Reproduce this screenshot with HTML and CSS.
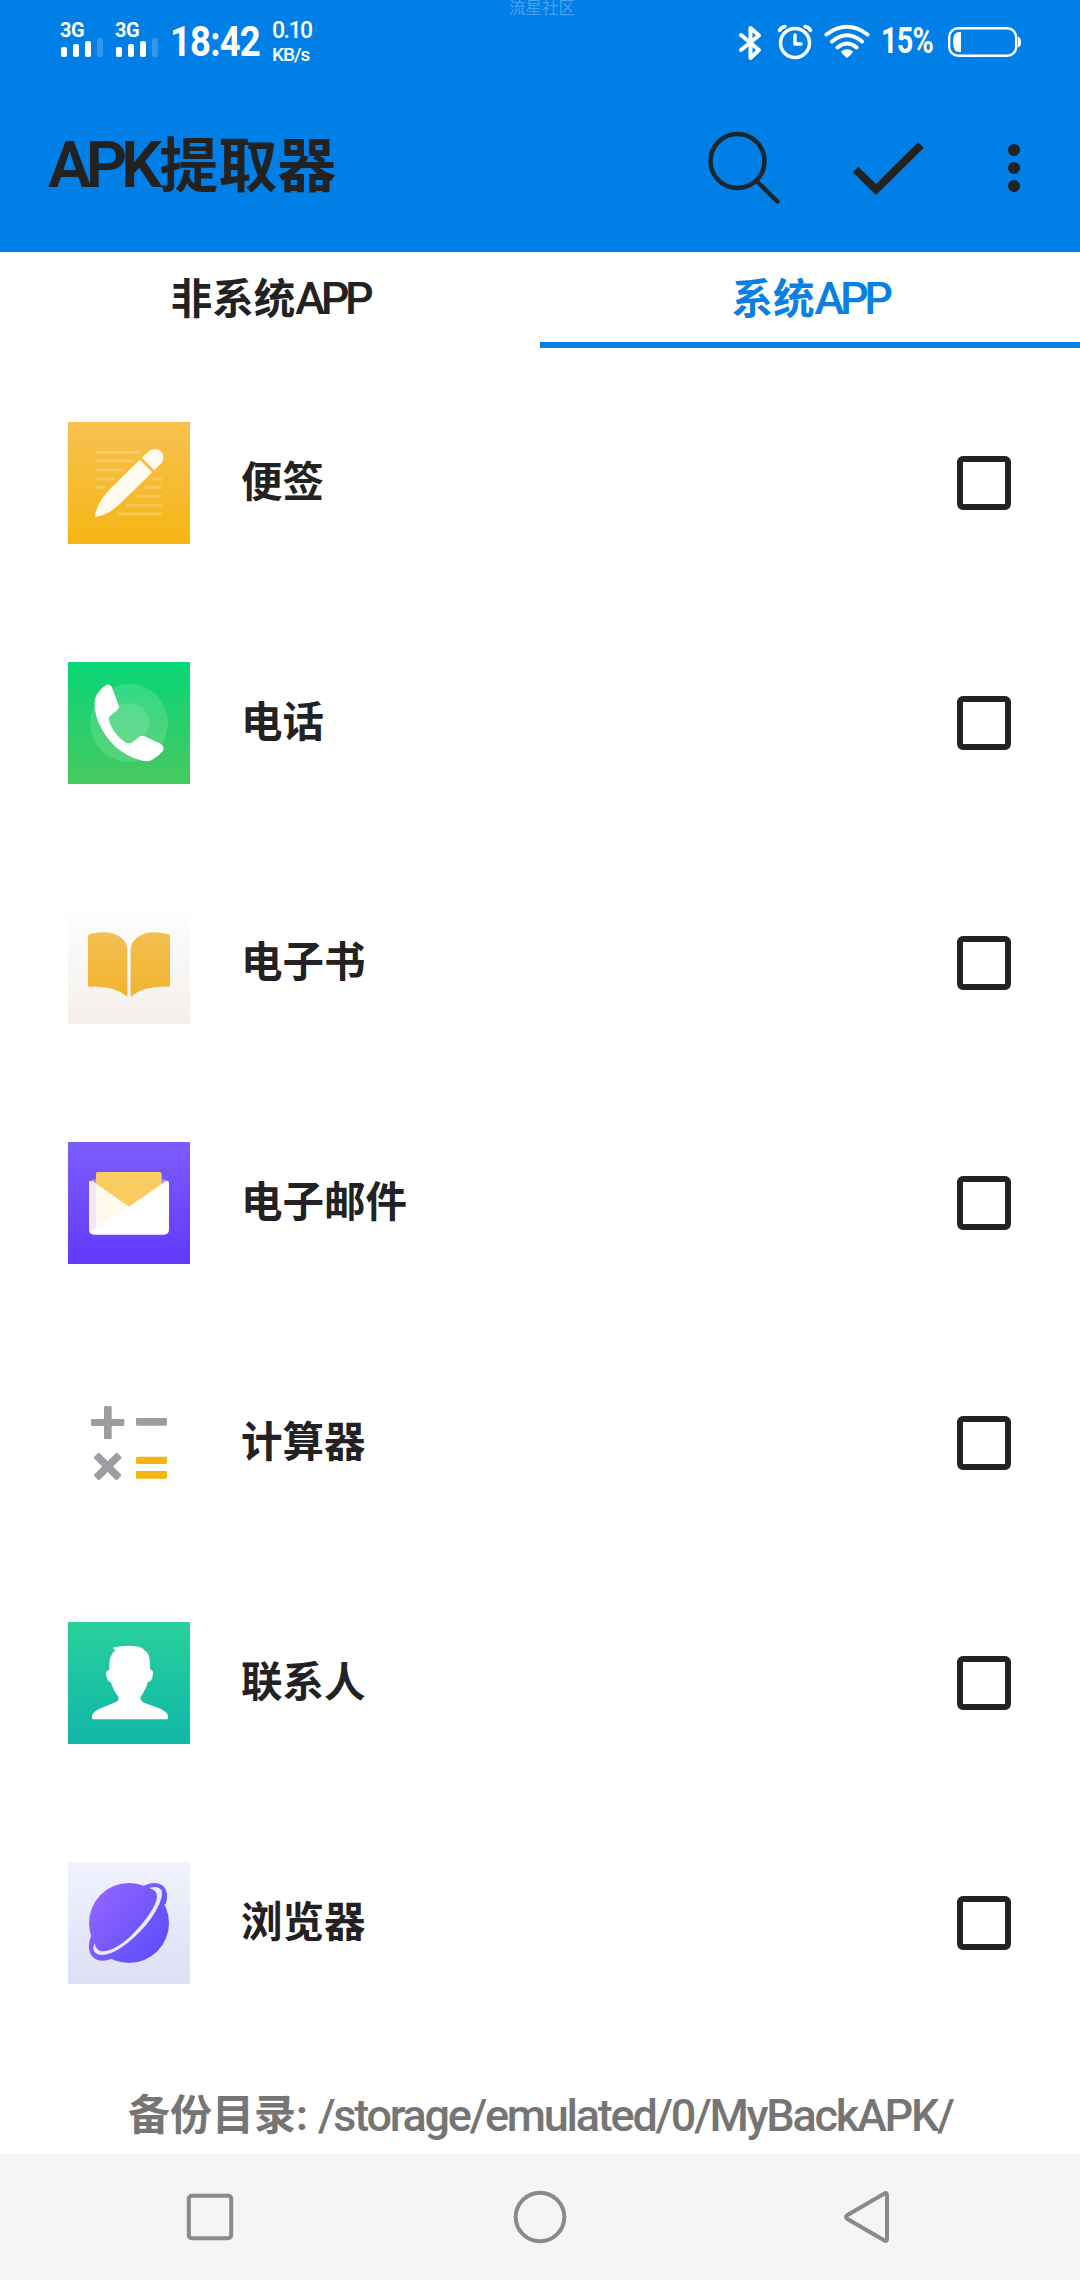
FILE: index.html
```html
<!DOCTYPE html>
<html lang="zh-CN">
<head>
  <meta charset="UTF-8" />
  <meta name="viewport" content="width=device-width, initial-scale=1" />
  <title>APK提取器</title>
  <link rel="stylesheet" href="styles.css">
</head>

<body>
  <div class="watermark">流星社区</div>

  <!-- Status bar -->
  <div class="status-bar">
    <div class="status-left">
      <div class="signal">
        <span>3G</span>
        <svg width="42" height="19" viewBox="0 0 42 19" fill="#fff">
          <rect x="0" y="9" width="6" height="10" rx="2" />
          <rect x="12" y="6" width="6" height="13" rx="2" />
          <rect x="24" y="3" width="6" height="16" rx="2" />
          <rect x="36" y="0" width="6" height="19" rx="2" opacity="0.2" />
        </svg>
      </div>
      <div class="signal">
        <span>3G</span>
        <svg width="42" height="19" viewBox="0 0 42 19" fill="#fff">
          <rect x="0" y="9" width="6" height="10" rx="2" />
          <rect x="12" y="6" width="6" height="13" rx="2" />
          <rect x="24" y="3" width="6" height="16" rx="2" />
          <rect x="36" y="0" width="6" height="19" rx="2" opacity="0.2" />
        </svg>
      </div>
      <span class="clock">18:42</span>
      <div class="net-speed">
        <span class="speed">0.10</span>
        <span class="unit">KB/s</span>
      </div>
    </div>
    <div class="status-right">
      <svg class="bluetooth" width="24" height="36" viewBox="0 0 24 36" fill="none" stroke="#fff" stroke-width="4" stroke-linecap="round" stroke-linejoin="round">
        <path d="M3 10L21 25L12.500 33V3L21 10.500L3 25" />
      </svg>
      <svg class="alarm" width="36" height="36" viewBox="0 0 36 36" fill="none" stroke="#fff" stroke-linecap="round">
        <circle cx="18" cy="19" r="14.500" stroke-width="3.500" />
        <path d="M18 11v9h6" stroke-width="3.500" stroke-linejoin="round" />
        <path d="M2.500 6.500Q4 3 8 2.500M33.500 6.500Q32 3 28 2.500" stroke-width="3.500" />
      </svg>
      <svg class="wifi" width="46" height="36" viewBox="0 0 46 36" fill="none" stroke="#fff" stroke-width="4" stroke-linecap="round">
        <path d="M2.500 10.500Q23 -5 43.500 10.500M8 17.500Q23 5 38 17.500M13.500 23.500Q23 15.500 32.500 23.500" />
        <path d="M17 27.500Q23 23 29 27.500Q28 30 23 34Q18 30 17 27.500Z" fill="#fff" stroke="none" />
      </svg>
      <span class="percent">15%</span>
      <svg class="battery" width="74" height="30" viewBox="0 0 74 30">
        <rect x="1.200" y="1.200" width="67" height="27.600" rx="9" fill="none" stroke="#fff" stroke-width="2.400" />
        <path d="M13 5v20h-2q-6 0-6-10t6-10z" fill="#fff" />
        <path d="M70 9.500q3 1 3 5.500t-3 5.500z" fill="#fff" />
      </svg>
    </div>
  </div>

  <!-- App bar -->
  <header class="app-bar">
    <h1><span class="latin">APK</span>提取器</h1>
    <div class="actions">
      <svg class="search" width="76" height="76" viewBox="0 0 76 76" fill="none" stroke="#18262f" stroke-width="4.500" stroke-linecap="round">
        <circle cx="31.500" cy="31" r="27" />
        <path d="M50.500 51L71.500 71.500" />
      </svg>
      <svg class="check" width="74" height="56" viewBox="0 0 74 56" fill="none" stroke="#222" stroke-width="8">
        <path d="M3.500 28.500L24 48.500L69 4" />
      </svg>
      <svg class="more" width="12" height="48" viewBox="0 0 12 48" fill="#222">
        <circle cx="6" cy="6" r="6" />
        <circle cx="6" cy="24" r="6" />
        <circle cx="6" cy="42" r="6" />
      </svg>
    </div>
  </header>

  <!-- Tabs -->
  <nav class="tabs">
    <a class="tab">非系统<span class="latin">APP</span></a>
    <a class="tab active">系统<span class="latin">APP</span></a>
  </nav>

  <!-- App list -->
  <ul class="app-list">
    <li>
      <svg class="icon" viewBox="0 0 366 366">
        <defs>
          <linearGradient id="note" x1="0" y1="0" x2="0" y2="1">
            <stop offset="0" stop-color="#f7c150" />
            <stop offset="1" stop-color="#f5b615" />
          </linearGradient>
        </defs>
        <rect width="366" height="366" fill="url(#note)" />
        <path d="M83 91h136M83 117h112M83 144h85M83 171h58M83 196h32M251 171h30M228 196h53M201 223h80M174 250h107M147 276h134" stroke="#fff" stroke-opacity="0.200" stroke-width="9" />
        <path d="M221 107L243 87Q258 76 274 85Q293 98 283 120L259 145Z" fill="#fffaf0" />
        <path d="M215 113L253 151L162 239Q122 281 81 285Q84 246 124 203Z" fill="#fffaf0" />
      </svg>
      <span class="name">便签</span>
      <span class="checkbox"></span>
    </li>
    <li>
      <svg class="icon" viewBox="0 0 366 366">
        <defs>
          <linearGradient id="phone" x1="0" y1="0" x2="0" y2="1">
            <stop offset="0" stop-color="#08d677" />
            <stop offset="1" stop-color="#47c95f" />
          </linearGradient>
        </defs>
        <rect width="366" height="366" fill="url(#phone)" />
        <circle cx="183" cy="183" r="117" fill="#fff" fill-opacity="0.140" />
        <circle cx="183" cy="183" r="60" fill="#fff" fill-opacity="0.130" />
        <path d="M114 69Q124 65 130 73Q134 81 153 133Q154 139 149 143L125 163Q121 168 123 176Q134 213 169 239Q179 247 191 242L216 223Q223 220 230 223L279 246Q290 254 285 267Q274 281 253 293Q238 301 218 295Q130 270 91 180Q76 141 81 110Q90 85 114 69Z" fill="#fff" />
      </svg>
      <span class="name">电话</span>
      <span class="checkbox"></span>
    </li>
    <li>
      <svg class="icon" viewBox="0 0 366 366">
        <defs>
          <linearGradient id="paper" x1="0" y1="0" x2="0" y2="1">
            <stop offset="0" stop-color="#fff" />
            <stop offset="1" stop-color="#f3efeb" />
          </linearGradient>
          <linearGradient id="book" x1="0" y1="0" x2="0" y2="1">
            <stop offset="0" stop-color="#f2c052" />
            <stop offset="1" stop-color="#f3b22d" />
          </linearGradient>
        </defs>
        <rect width="366" height="366" fill="url(#paper)" />
        <path d="M60 103Q60 98 66 96Q126 81 158 106Q178 123 178 142V284Q139 251 66 254Q60 254 60 248Z" fill="url(#book)" />
        <path d="M306 103Q306 98 300 96Q240 81 208 106Q188 123 188 142V284Q227 251 300 254Q306 254 306 248Z" fill="url(#book)" />
      </svg>
      <span class="name">电子书</span>
      <span class="checkbox"></span>
    </li>
    <li>
      <svg class="icon" viewBox="0 0 366 366">
        <defs>
          <linearGradient id="mail" x1="0" y1="0" x2="0" y2="1">
            <stop offset="0" stop-color="#7c5dfc" />
            <stop offset="1" stop-color="#6139fc" />
          </linearGradient>
        </defs>
        <rect width="366" height="366" fill="url(#mail)" />
        <rect x="66" y="112" width="234" height="40" rx="14" fill="#a78df8" />
        <path d="M84 96Q84 90 90 90H275Q281 90 281 96V150L183 210L84 140Z" fill="#f8cc61" />
        <path d="M63 124Q63 113 73 118L183 194L293 118Q303 113 303 124V262Q303 278 287 278H79Q63 278 63 262Z" fill="#fff" />
        <path d="M84 125L183 194L84 258Z" fill="#fffaec" />
        <path d="M63 124Q63 113 73 118L84 125V258L65 269Q63 266 63 262Z" fill="#eeeafc" />
      </svg>
      <span class="name">电子邮件</span>
      <span class="checkbox"></span>
    </li>
    <li>
      <svg class="icon" viewBox="0 0 366 366">
        <g fill="#9b9da1">
          <rect x="69" y="111" width="100" height="21" rx="4" />
          <rect x="108" y="72" width="23" height="99" rx="4" />
          <rect x="204" y="108" width="93" height="23" rx="4" />
          <g transform="rotate(45 119 253)">
            <rect x="70" y="242" width="98" height="23" rx="4" />
            <rect x="108" y="204" width="23" height="98" rx="4" />
          </g>
        </g>
        <g fill="#f6b516">
          <rect x="204" y="224" width="93" height="22" rx="4" />
          <rect x="204" y="267" width="93" height="23" rx="4" />
        </g>
      </svg>
      <span class="name">计算器</span>
      <span class="checkbox"></span>
    </li>
    <li>
      <svg class="icon" viewBox="0 0 366 366">
        <defs>
          <linearGradient id="contact" x1="0" y1="0" x2="0" y2="1">
            <stop offset="0" stop-color="#29d09b" />
            <stop offset="1" stop-color="#11b7a8" />
          </linearGradient>
        </defs>
        <rect width="366" height="366" fill="url(#contact)" />
        <path d="M136 76Q181 67 212 74Q226 78 232 87Q248 95 246 142Q257 145 255 156Q252 180 239 181Q235 201 217 226Q217 238 230 243L264 255Q300 267 300 284V288Q300 292 296 292H76Q72 292 72 288V284Q72 267 108 255L142 241Q153 237 152 226Q134 202 129 181Q118 181 114 157Q112 146 124 144Q121 99 143 84Q134 83 136 76Z" fill="#fff" />
      </svg>
      <span class="name">联系人</span>
      <span class="checkbox"></span>
    </li>
    <li>
      <svg class="icon" viewBox="0 0 366 366">
        <defs>
          <linearGradient id="sky" x1="0" y1="0" x2="0" y2="1">
            <stop offset="0" stop-color="#f0f2fe" />
            <stop offset="1" stop-color="#dce0f3" />
          </linearGradient>
          <linearGradient id="planet" gradientUnits="userSpaceOnUse" x1="80" y1="110" x2="270" y2="260">
            <stop offset="0" stop-color="#9063ff" />
            <stop offset="1" stop-color="#614ffb" />
          </linearGradient>
        </defs>
        <rect width="366" height="366" fill="url(#sky)" />
        <circle cx="183" cy="183" r="120" fill="url(#planet)" />
        <path d="M225 72Q264 54 285 71Q305 90 293 127L268 130L220 90ZM70 219Q54 263 74 284Q94 305 132 290L140 255L90 215Z" fill="url(#planet)" />
        <path d="M244 78Q272 70 281 86Q288 117 237 186Q177 254 129 273Q91 287 78 268Q73 256 80 244Q83 262 96 267Q131 274 189 222Q257 152 267 108Q268 84 244 78Z" fill="#e8ebfa" />
      </svg>
      <span class="name">浏览器</span>
      <span class="checkbox"></span>
    </li>
  </ul>

  <footer>备份目录<span class="colon">:</span><span class="path">/storage/emulated/0/MyBackAPK/</span></footer>

  <!-- System navigation -->
  <div class="nav-bar">
    <svg width="56" height="56" viewBox="0 0 56 56"><rect x="6.800" y="6.800" width="42.400" height="42.400" rx="3" /></svg>
    <svg width="56" height="56" viewBox="0 0 56 56"><circle cx="28" cy="28" r="24.300" /></svg>
    <svg width="56" height="56" viewBox="0 0 56 56"><path d="M43.500 4.500Q46 3 46 6V50Q46 53 43.500 51.500L6.500 30Q3.500 28 6.500 26Z" /></svg>
  </div>
</body>
</html>
```
FILE: styles.css
```css
/* Base styles */
* {
  box-sizing: border-box;
}

body {
  margin: 0;
  width: 1080px;
  height: 2280px;
  display: flex;
  flex-direction: column;
  position: relative;
  overflow: hidden;
  background: #fff;
  color: #222;
  font-family: Roboto, "Noto Sans CJK SC", sans-serif;
  font-weight: 700;
}

svg {
  display: block;
  flex: none;
}

.watermark {
  position: absolute;
  top: 0;
  left: 2px;
  width: 100%;
  text-align: center;
  font-size: 16.5px;
  line-height: 17px;
  font-weight: 400;
  color: #48a2ee;
}

/* Status bar */
.status-bar {
  height: 84px;
  flex: none;
  display: flex;
  justify-content: space-between;
  padding: 0 58px 0 60px;
  background: #0080e7;
  color: #fff;
}

.status-left,
.status-right {
  display: flex;
}

.signal {
  width: 55px;
  padding-top: 20px;
}

.signal span {
  display: block;
  height: 18px;
  font-size: 20px;
  line-height: 20px;
  letter-spacing: -0.5px;
}

.signal svg {
  margin-left: 1px;
}

.clock {
  width: 102px;
  font-size: 43px;
  line-height: 82px;
  letter-spacing: -1px;
  transform: scaleX(0.85);
  transform-origin: left;
}

.net-speed {
  padding-top: 19px;
  font-weight: 500;
}

.net-speed span {
  display: block;
}

.speed {
  font-size: 23px;
  line-height: 24px;
  letter-spacing: -1.5px;
}

.unit {
  font-size: 19px;
  line-height: 23px;
  letter-spacing: -1px;
}

.bluetooth {
  margin: 25px 15px 0 0;
}

.alarm {
  margin: 24px 11px 0 0;
}

.wifi {
  margin: 24px 11px 0 0;
}

.percent {
  width: 67px;
  font-size: 36px;
  line-height: 82px;
  letter-spacing: -1px;
  transform: scaleX(0.8);
  transform-origin: left;
}

.battery {
  margin-top: 27px;
}

/* App bar */
.app-bar {
  height: 168px;
  flex: none;
  display: flex;
  justify-content: space-between;
  background: #0080e7;
  padding: 0 60px 0 48px;
}

h1 {
  margin: 0;
  font-size: 59px;
  line-height: 163px;
}

h1 .latin {
  font-size: 65px;
  font-weight: 600;
  letter-spacing: -6px;
  margin-right: 3px;
}

.actions {
  display: flex;
}

.search {
  margin: 46px 70px 0 0;
}

.check {
  margin: 57px 82px 0 0;
}

.more {
  margin-top: 60px;
}

/* Tabs */
.tabs {
  height: 96px;
  flex: none;
  display: grid;
  grid-template-columns: 1fr 1fr;
}

.tab {
  height: 96px;
  text-align: center;
  font-size: 41.5px;
  line-height: 94px;
}

.tab .latin {
  font-size: 45px;
  font-weight: 500;
  letter-spacing: -4.5px;
}

.tab.active {
  color: #0a80e2;
  border-bottom: 6px solid #0a80e2;
}

/* App list */
.app-list {
  list-style: none;
  margin: 0;
  padding: 15px 69px 0 68px;
}

.app-list li {
  height: 240px;
  display: flex;
  align-items: center;
}

.icon {
  width: 122px;
  height: 122px;
}

.name {
  flex: 1;
  margin: -9px 0 0 51px;
  font-size: 41.5px;
}

.checkbox {
  width: 54px;
  height: 54px;
  border: 6px solid #222;
  border-radius: 6px;
}

/* Backup folder */
footer {
  flex: 1;
  display: flex;
  align-items: center;
  padding: 34px 0 0 128px;
  font-size: 42px;
  line-height: 60px;
  color: #757575;
}

footer .colon {
  width: 22px;
}

footer .path {
  font-size: 45px;
  font-weight: 500;
  letter-spacing: -2.25px;
}

/* System navigation */
.nav-bar {
  height: 126px;
  flex: none;
  display: flex;
  justify-content: space-between;
  align-items: center;
  padding: 0 183px 0 182px;
  background: #f5f5f5;
}

.nav-bar svg {
  fill: none;
  stroke: #8a8a8a;
  stroke-width: 4;
}
```
